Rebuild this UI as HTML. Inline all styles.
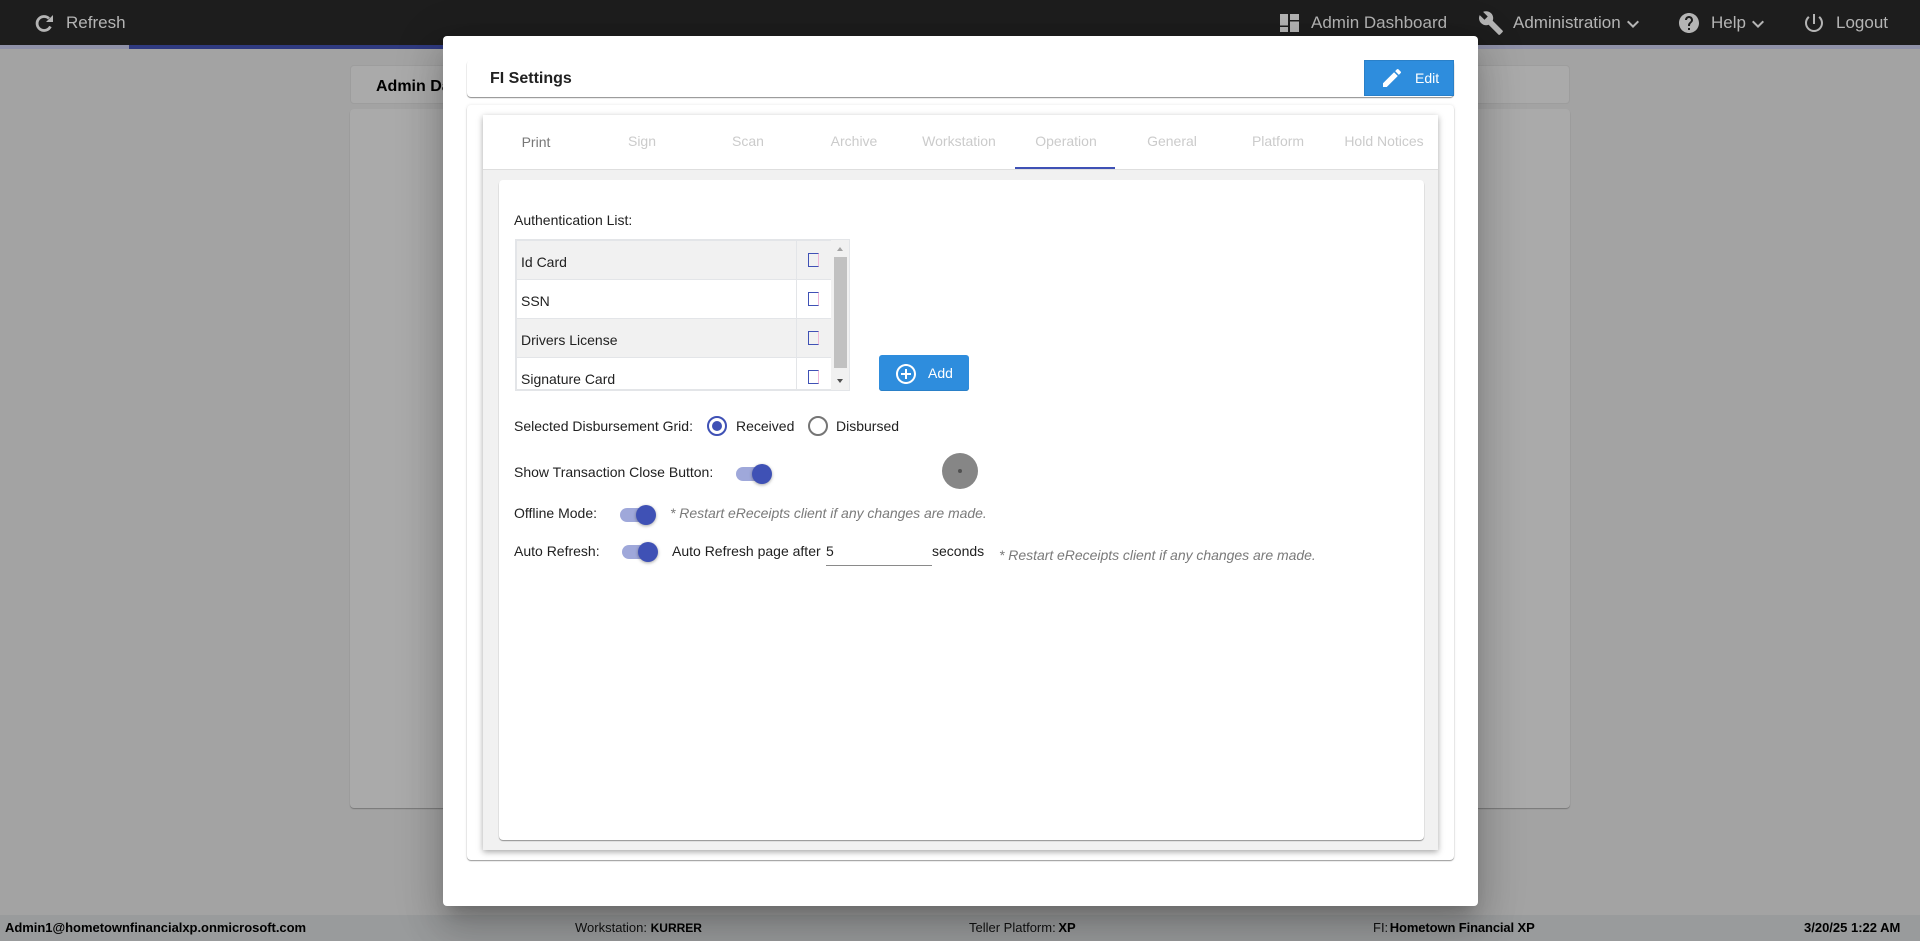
<!DOCTYPE html>
<html><head><meta charset="utf-8"><title>FI Settings</title>
<style>
html,body{margin:0;padding:0;width:1920px;height:941px;overflow:hidden;background:#a3a3a3;font-family:"Liberation Sans",Arial,sans-serif;color:#212121}
.a{position:absolute}
.t{position:absolute;white-space:nowrap;font-size:14px;line-height:20px}
svg{position:absolute;display:block}
.n{color:#b4b4b4;font-size:17px;line-height:24px;top:11px}
.tab{position:absolute;top:131px;width:106px;text-align:center;font-size:14px;line-height:20px;color:#cbcbcb}
.cell{position:absolute;left:517px;width:279px;height:38px;border-bottom:1px solid #e3e5e8}
.cell2{position:absolute;left:797px;width:34px;height:38px;border-bottom:1px solid #e3e5e8}
.chk{position:absolute;left:808px;width:9px;height:12px;border:1px solid #3f51b5;border-right-color:#f0b8d8}
.track{position:absolute;width:34px;height:14px;border-radius:7px;background:#9fa8da}
.thumb{position:absolute;width:20px;height:20px;border-radius:50%;background:#3f51b5;box-shadow:0 1px 3px rgba(0,0,0,.35)}
.f{position:absolute;top:918px;font-size:13px;line-height:20px;color:#111;white-space:nowrap}
.f b{color:#000}
</style></head><body>
<!-- nav -->
<div class="a" style="left:0;top:0;width:1920px;height:45px;background:#1d1d1d"></div>
<div class="a" style="left:0;top:45px;width:1920px;height:4px;background:#8f91a8"></div>
<div class="a" style="left:129px;top:45px;width:700px;height:4px;background:#2f3a80"></div>
<svg style="left:32px;top:11px" width="24" height="24" viewBox="0 0 24 24"><path d="M17 7.5A7 7 0 1 0 18.4 15.5" fill="none" stroke="#b4b4b4" stroke-width="2.8"/><path d="M21 4v7h-7z" fill="#b4b4b4"/></svg>
<div class="t n" style="left:66px">Refresh</div>
<svg style="left:1280px;top:14px" width="19" height="18" viewBox="0 0 19 18" fill="#b4b4b4"><path d="M0 0h8v11.5H0zM0 13h8v5H0zM10 0h9v6h-9zM10 7.5h9V18h-9z"/></svg>
<div class="t n" style="left:1311px">Admin Dashboard</div>
<svg style="left:1478px;top:10px" width="26" height="26" viewBox="0 0 24 24" fill="#b4b4b4"><path d="M22.7 19l-9.1-9.1c.9-2.3.4-5-1.5-6.9-2-2-5-2.4-7.4-1.3L9 6 6 9 1.6 4.7C.4 7.1.9 10.1 2.9 12.1c1.9 1.9 4.6 2.4 6.9 1.5l9.1 9.1c.4.4 1 .4 1.4 0l2.3-2.3c.5-.4.5-1.1.1-1.4z"/></svg>
<div class="t n" style="left:1513px">Administration</div>
<svg style="left:1623px;top:12px" width="20" height="24" viewBox="0 0 20 24" fill="#b4b4b4"><path d="M14.59 8.59L10 13.17 5.41 8.59 4 10l6 6 6-6z"/></svg>
<svg style="left:1677px;top:11px" width="24" height="24" viewBox="0 0 24 24" fill="#b4b4b4"><path d="M12 2C6.48 2 2 6.48 2 12s4.48 10 10 10 10-4.48 10-10S17.52 2 12 2zm1 17h-2v-2h2v2zm2.07-7.75l-.9.92C13.45 12.9 13 13.5 13 15h-2v-.5c0-1.1.45-2.1 1.17-2.83l1.24-1.26c.37-.36.59-.86.59-1.41 0-1.1-.9-2-2-2s-2 .9-2 2H8c0-2.21 1.79-4 4-4s4 1.79 4 4c0 .88-.36 1.68-.93 2.25z"/></svg>
<div class="t n" style="left:1711px">Help</div>
<svg style="left:1748px;top:12px" width="20" height="24" viewBox="0 0 20 24" fill="#b4b4b4"><path d="M14.59 8.59L10 13.17 5.41 8.59 4 10l6 6 6-6z"/></svg>
<svg style="left:1802px;top:11px" width="24" height="24" viewBox="0 0 24 24" fill="#b4b4b4"><path d="M13 3h-2v10h2V3zm4.83 2.17l-1.42 1.42C17.99 7.86 19 9.81 19 12c0 3.87-3.13 7-7 7s-7-3.13-7-7c0-2.19 1.01-4.14 2.58-5.42L6.17 5.17C4.23 6.82 3 9.26 3 12c0 4.97 4.03 9 9 9s9-4.03 9-9c0-2.74-1.23-5.18-3.17-6.83z"/></svg>
<div class="t n" style="left:1836px">Logout</div>
<!-- background cards -->
<div class="a" style="left:350px;top:65px;width:1218px;height:37px;background:#aaa;border:1px solid #9d9d9d;border-radius:4px"></div>
<div class="t" style="left:376px;top:77px;font-size:16px;font-weight:bold;color:#000">Admin Dashboard</div>
<div class="a" style="left:350px;top:109px;width:1220px;height:699px;background:#aaa;border-radius:4px;box-shadow:0 1px 1px #777"></div>
<!-- footer -->
<div class="a" style="left:0;top:915px;width:1920px;height:26px;background:#999b9c"></div>
<div class="f" style="left:5px;letter-spacing:-.03px"><b>Admin1@hometownfinancialxp.onmicrosoft.com</b></div>
<div class="f" style="left:575px">Workstation: <b style="font-size:12px">KURRER</b></div>
<div class="f" style="left:969px">Teller Platform: <b style="margin-left:-1px">XP</b></div>
<div class="f" style="left:1373px">FI: <b style="letter-spacing:-.12px;margin-left:-2px">Hometown Financial XP</b></div>
<div class="f" style="left:1804px"><b>3/20/25 1:22 AM</b></div>
<!-- modal -->
<div class="a" style="left:443px;top:36px;width:1035px;height:870px;background:#fff;border-radius:4px;box-shadow:0 11px 15px -7px rgba(0,0,0,.2),0 24px 38px 3px rgba(0,0,0,.14),0 9px 46px 8px rgba(0,0,0,.12)"></div>
<div class="a" style="left:467px;top:60px;width:987px;height:37px;background:#fff;border-radius:4px;box-shadow:0 1px 1px #8a8a8a"></div>
<div class="t" style="left:490px;top:69px;font-size:16px;font-weight:bold;color:#212121">FI Settings</div>
<div class="a" style="left:1364px;top:60px;width:90px;height:36px;background:#2e8ddd;box-shadow:inset 0 0 0 1px #2a80c8"></div>
<svg style="left:1380px;top:66px" width="24" height="24" viewBox="0 0 24 24" fill="#fff"><path d="M3 17.25V21h3.75L17.81 9.94l-3.75-3.75L3 17.25zM20.71 7.04c.39-.39.39-1.02 0-1.41l-2.34-2.34c-.39-.39-1.02-.39-1.41 0l-1.83 1.83 3.75 3.75 1.83-1.83z"/></svg>
<div class="t" style="left:1415px;top:68px;color:#fff">Edit</div>
<!-- outer card -->
<div class="a" style="left:467px;top:105px;width:987px;height:755px;background:#fff;border-radius:4px;box-shadow:0 1px 1px #999,0 0 3px rgba(0,0,0,.1)"></div>
<div class="a" style="left:483px;top:115px;width:955px;height:735px;background:#f1f1f1;box-shadow:0 2px 6px rgba(0,0,0,.35)"></div>
<div class="a" style="left:483px;top:115px;width:955px;height:54px;background:#fff;border-bottom:1px solid #dedede"></div>
<div class="tab" style="left:483px;top:132px;color:#777">Print</div>
<div class="tab" style="left:589px">Sign</div>
<div class="tab" style="left:695px">Scan</div>
<div class="tab" style="left:801px">Archive</div>
<div class="tab" style="left:906px">Workstation</div>
<div class="tab" style="left:1013px">Operation</div>
<div class="tab" style="left:1119px">General</div>
<div class="tab" style="left:1225px">Platform</div>
<div class="tab" style="left:1331px">Hold Notices</div>
<div class="a" style="left:1015px;top:167px;width:100px;height:2px;background:#3f51b5"></div>
<!-- inner card -->
<div class="a" style="left:499px;top:180px;width:925px;height:660px;background:#fff;border-radius:4px;box-shadow:0 1px 1px #8f8f8f"></div>
<div class="t" style="left:514px;top:210px">Authentication List:</div>
<!-- table -->
<div class="a" style="left:515px;top:239px;width:335px;height:152px;background:#fff;box-sizing:border-box;border:2px solid #e3e5e8;border-right-width:1px"></div>
<div class="cell" style="top:241px;background:#f1f1f1"></div>
<div class="cell" style="top:280px"></div>
<div class="cell" style="top:319px;background:#f1f1f1"></div>
<div class="cell2" style="top:241px;background:#f1f1f1"></div>
<div class="cell2" style="top:280px"></div>
<div class="cell2" style="top:319px;background:#f1f1f1"></div>
<div class="a" style="left:796px;top:241px;width:1px;height:148px;background:#e3e5e8"></div>
<div class="t" style="left:521px;top:252px">Id Card</div>
<div class="t" style="left:521px;top:291px">SSN</div>
<div class="t" style="left:521px;top:330px">Drivers License</div>
<div class="t" style="left:521px;top:369px">Signature Card</div>
<div class="chk" style="top:253px"></div>
<div class="chk" style="top:292px"></div>
<div class="chk" style="top:331px"></div>
<div class="chk" style="top:370px"></div>
<div class="a" style="left:831px;top:240px;width:18px;height:150px;background:#f1f1f1"></div>
<div class="a" style="left:834px;top:257px;width:13px;height:111px;background:#c1c1c1"></div>
<div class="a" style="left:837px;top:247px;width:0;height:0;border-left:3px solid transparent;border-right:3px solid transparent;border-bottom:4px solid #a3a3a3"></div>
<div class="a" style="left:837px;top:379px;width:0;height:0;border-left:3px solid transparent;border-right:3px solid transparent;border-top:4px solid #505050"></div>
<!-- add -->
<div class="a" style="left:879px;top:355px;width:90px;height:36px;background:#2e8ddd;border-radius:3px;box-shadow:inset 0 -1px 0 #2a80c8"></div>
<svg style="left:894px;top:362px" width="24" height="24" viewBox="0 0 24 24" fill="#fff"><path d="M13 7h-2v4H7v2h4v4h2v-4h4v-2h-4V7zm-1-5C6.48 2 2 6.48 2 12s4.48 10 10 10 10-4.48 10-10S17.52 2 12 2zm0 18c-4.41 0-8-3.59-8-8s3.59-8 8-8 8 3.59 8 8-3.59 8-8 8z"/></svg>
<div class="t" style="left:928px;top:363px;color:#fff">Add</div>
<!-- radio -->
<div class="t" style="left:514px;top:416px">Selected Disbursement Grid:</div>
<div class="a" style="left:707px;top:416px;width:16px;height:16px;border:2px solid #3f51b5;border-radius:50%"></div>
<div class="a" style="left:712px;top:421px;width:10px;height:10px;background:#3f51b5;border-radius:50%"></div>
<div class="t" style="left:736px;top:416px">Received</div>
<div class="a" style="left:808px;top:416px;width:16px;height:16px;border:2px solid #757575;border-radius:50%"></div>
<div class="t" style="left:836px;top:416px">Disbursed</div>
<!-- show close -->
<div class="t" style="left:514px;top:462px">Show Transaction Close Button:</div>
<div class="track" style="left:736px;top:467px"></div>
<div class="thumb" style="left:752px;top:464px"></div>
<div class="a" style="left:942px;top:453px;width:36px;height:36px;border-radius:50%;background:#868686"></div>
<div class="a" style="left:958px;top:469px;width:4px;height:4px;border-radius:50%;background:#505050"></div>
<!-- offline -->
<div class="t" style="left:514px;top:503px">Offline Mode:</div>
<div class="track" style="left:620px;top:508px"></div>
<div class="thumb" style="left:636px;top:505px"></div>
<div class="t" style="left:670px;top:503px;font-style:italic;color:#7a7a7a;letter-spacing:-.03px">* Restart eReceipts client if any changes are made.</div>
<!-- auto -->
<div class="t" style="left:514px;top:541px">Auto Refresh:</div>
<div class="track" style="left:622px;top:545px"></div>
<div class="thumb" style="left:638px;top:542px"></div>
<div class="t" style="left:672px;top:541px">Auto Refresh page after</div>
<div class="t" style="left:826px;top:541px">5</div>
<div class="a" style="left:826px;top:565px;width:106px;height:1px;background:#8a8a8a"></div>
<div class="t" style="left:932px;top:541px">seconds</div>
<div class="t" style="left:999px;top:545px;font-style:italic;color:#7a7a7a;letter-spacing:-.03px">* Restart eReceipts client if any changes are made.</div>
</body></html>
